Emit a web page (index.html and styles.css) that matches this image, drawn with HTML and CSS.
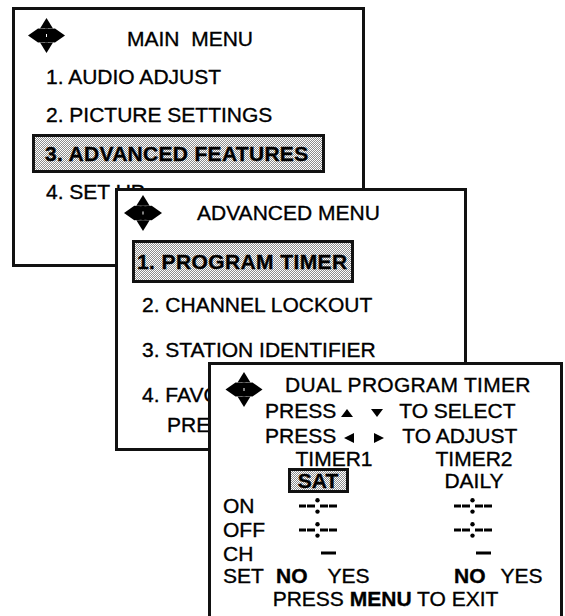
FILE: index.html
```html
<!DOCTYPE html>
<html lang="en">
<head>
<meta charset="utf-8">
<title>Menus</title>
<link rel="stylesheet" href="styles.css">
</head>
<body>
<svg class="defs" width="0" height="0" aria-hidden="true">
  <defs>
    <symbol id="pad" viewBox="0 0 37 35">
      <polygon points="18.5,0 25,10.5 12,10.5"/>
      <polygon points="12,24.5 25,24.5 18.5,35"/>
      <polygon points="0,17.5 10,10.5 18,11 18,24 10,24.5"/>
      <polygon points="37,17.5 27,10.5 19,11 19,24 27,24.5"/>
      <rect x="17" y="10.5" width="3" height="5.5"/>
      <rect x="17" y="19" width="3" height="5.5"/>
    </symbol>
    <symbol id="time" viewBox="0 0 40 20">
      <rect x="0" y="8.5" width="7" height="3"/>
      <rect x="8" y="8.5" width="8" height="3"/>
      <circle cx="18.5" cy="4.2" r="2.2"/>
      <circle cx="18.5" cy="15.6" r="2.2"/>
      <rect x="21" y="8.5" width="8" height="3"/>
      <rect x="30" y="8.5" width="8" height="3"/>
    </symbol>
    <symbol id="chan" viewBox="0 0 40 20">
      <rect x="22" y="8.5" width="15" height="3"/>
    </symbol>
  </defs>
</svg>

<div class="screen">
  <section class="win win-main">
    <div class="head head-main">
      <svg class="pad"><use href="#pad"/></svg>
      <h1 class="title title-main">MAIN&nbsp; MENU</h1>
    </div>
    <ul class="list list-main">
      <li class="item">1. AUDIO ADJUST</li>
      <li class="item">2. PICTURE SETTINGS</li>
      <li class="item sel">3. ADVANCED FEATURES</li>
      <li class="item">4. SET UP</li>
    </ul>
  </section>

  <section class="win win-adv">
    <div class="head head-adv">
      <svg class="pad"><use href="#pad"/></svg>
      <h1 class="title title-adv">ADVANCED MENU</h1>
    </div>
    <ul class="list list-adv">
      <li class="item sel">1. PROGRAM TIMER</li>
      <li class="item first">2. CHANNEL LOCKOUT</li>
      <li class="item">3. STATION IDENTIFIER</li>
      <li class="item">4. FAVORITE</li>
      <li class="note">PRESS</li>
    </ul>
  </section>

  <section class="win win-dual">
    <div class="head head-dual">
      <svg class="pad"><use href="#pad"/></svg>
      <div class="lines">
        <div class="line line-first">DUAL PROGRAM TIMER</div>
        <div class="line">PRESS<svg class="tri tri-v tri-a" viewBox="0 0 12 8"><polygon points="6,0 12,8 0,8"/></svg><svg class="tri tri-v tri-b" viewBox="0 0 12 8"><polygon points="0,0 12,0 6,8"/></svg><span class="after after-v">TO SELECT</span></div>
        <div class="line">PRESS<svg class="tri tri-h tri-c" viewBox="0 0 10 10"><polygon points="0,5 10,0 10,10"/></svg><svg class="tri tri-h tri-d" viewBox="0 0 10 10"><polygon points="10,5 0,0 0,10"/></svg><span class="after after-h">TO ADJUST</span></div>
      </div>
    </div>
    <div class="grid">
      <div class="cell c1 r1 timer1">TIMER1</div>
      <div class="cell c2 r1">TIMER2</div>

      <div class="cell c1 r2"><span class="sat">SAT</span></div>
      <div class="cell c2 r2">DAILY</div>

      <div class="label r3">ON</div>
      <div class="cell c1 r3"><svg class="digits"><use href="#time"/></svg></div>
      <div class="cell c2 r3"><svg class="digits"><use href="#time"/></svg></div>

      <div class="label r4">OFF</div>
      <div class="cell c1 r4"><svg class="digits"><use href="#time"/></svg></div>
      <div class="cell c2 r4"><svg class="digits"><use href="#time"/></svg></div>

      <div class="label r5">CH</div>
      <div class="cell c1 r5"><svg class="digits"><use href="#chan"/></svg></div>
      <div class="cell c2 r5"><svg class="digits"><use href="#chan"/></svg></div>

      <div class="label r6">SET</div>
      <div class="cell c1 r6 set1"><b class="no">NO</b><span class="yes">YES</span></div>
      <div class="cell c2 r6 set2"><b class="no">NO</b><span class="yes yes2">YES</span></div>
    </div>
    <div class="exit">PRESS <b>MENU</b> TO EXIT</div>
  </section>
</div>
</body>
</html>
```

FILE: styles.css
```css
* {
  box-sizing: border-box;
  margin: 0;
  padding: 0;
}

body {
  margin: 0;
  background: #fff;
  color: #000;
  font-family: "Liberation Sans", Arial, sans-serif;
}

.defs {
  position: absolute;
  width: 0;
  height: 0;
}

.screen {
  position: relative;
  width: 565px;
  height: 616px;
  overflow: hidden;
  background: #fff;
}

.win {
  position: absolute;
  background: #fff;
  border: 3px solid #111;
  font-size: 21px;
  -webkit-text-stroke: 0.35px #000;
}

.win-main { left: 12px; top: 7px; width: 353px; height: 260px; }
.win-adv { left: 115px; top: 188px; width: 352px; height: 263px; }
.win-dual { left: 208px; top: 362px; width: 355px; height: 290px; }

.head {
  display: flex;
  align-items: flex-start;
}

.pad {
  display: block;
  fill: #000;
  flex: none;
}

.title {
  font-size: 21px;
  font-weight: normal;
  line-height: 24px;
  white-space: nowrap;
}

/* main menu */
.head-main { height: 48px; padding-left: 13px; }
.head-main .pad { width: 37px; height: 35px; margin-top: 8px; }
.title-main { margin-left: 62px; margin-top: 16.5px; }

.list { list-style: none; }
.item { white-space: nowrap; }

.list-main { padding-left: 31px; }
.list-main .item { height: 38px; line-height: 38px; }
.list-main .sel {
  margin-left: -14px;
  width: 293px;
  height: 39px;
  padding-left: 10px;
  line-height: 33px;
}

.sel {
  border: 3px solid #111;
  font-weight: bold;
  letter-spacing: 0.3px;
  background: repeating-conic-gradient(#8c8c8c 0 25%, #fff 0 50%) 0 0 / 2px 2px;
}

/* advanced menu */
.head-adv { height: 49px; padding-left: 6px; }
.head-adv .pad { width: 38px; height: 38px; margin-top: 3px; }
.title-adv { margin-left: 35px; margin-top: 9.5px; }

.list-adv { padding-left: 24px; }
.list-adv .item { line-height: 38px; margin-top: 7px; }
.list-adv .first { margin-top: 3px; }
.list-adv .sel {
  margin-top: 0;
  margin-left: -10px;
  width: 222px;
  height: 43px;
  padding-left: 2px;
  line-height: 37px;
  letter-spacing: 0.4px;
}
.note { margin-left: 25px; line-height: 22px; white-space: nowrap; }

/* dual program timer */
.head-dual { padding-left: 14px; padding-top: 7px; }
.head-dual .pad { width: 38px; height: 35px; }
.lines { margin-left: 2px; line-height: 25.5px; white-space: nowrap; }
.line-first { padding-left: 20px; letter-spacing: 0.3px; }

.tri {
  display: inline-block;
  fill: #000;
  vertical-align: baseline;
}
.tri-v { width: 12px; height: 8px; margin-bottom: 1px; }
.tri-h { width: 10px; height: 10px; }
.tri-a { margin-left: 5px; }
.tri-b { margin-left: 18px; }
.tri-c { margin-left: 8px; }
.tri-d { margin-left: 20px; }
.after-v { margin-left: 16px; }
.after-h { margin-left: 18px; }

.grid {
  display: grid;
  grid-template-columns: 44px 104px 45px 116px;
  grid-template-rows: 19.5px 25px 25px 23px 24px 21px;
  padding-left: 12px;
  align-items: center;
  line-height: 1;
  white-space: nowrap;
}

.label { grid-column: 1; }
.c1 { grid-column: 2; justify-self: center; }
.c2 { grid-column: 4; justify-self: center; }
.r1 { grid-row: 1; }
.r2 { grid-row: 2; }
.r3 { grid-row: 3; }
.r4 { grid-row: 4; }
.r5 { grid-row: 5; }
.r6 { grid-row: 6; }

.timer1 { padding-left: 30px; }
.set1 { justify-self: start; margin-left: 9px; }
.set2 { justify-self: start; margin-left: 38px; }

.sat {
  display: block;
  width: 61px;
  height: 25px;
  margin-right: 2px;
  border: 3px solid #111;
  font-weight: bold;
  text-align: center;
  line-height: 19px;
  background: repeating-conic-gradient(#8c8c8c 0 25%, #fff 0 50%) 0 0 / 2px 2px;
}

.digits {
  display: block;
  width: 40px;
  height: 20px;
  fill: #000;
}

.yes { margin-left: 20px; }
.yes2 { margin-left: 15px; }

.exit { text-align: center; line-height: 26px; white-space: nowrap; }
```
